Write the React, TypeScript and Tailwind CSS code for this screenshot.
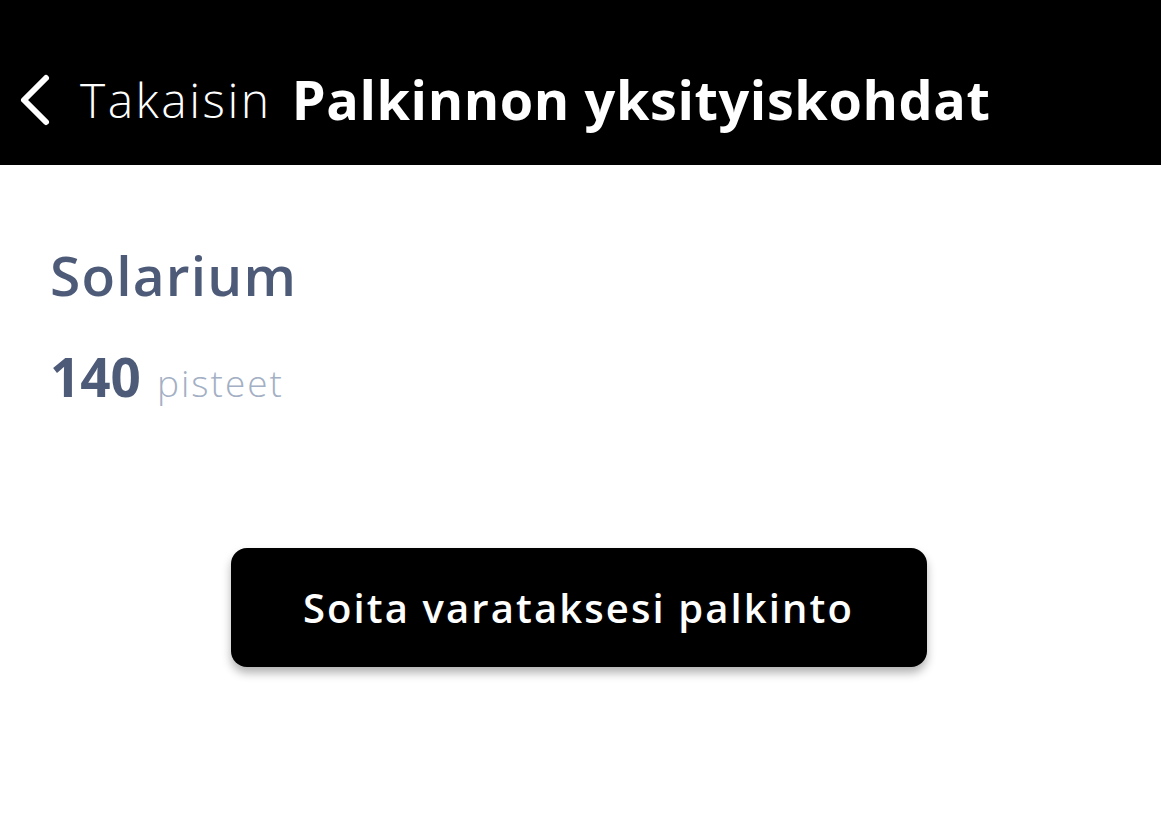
export default function App() {
  return (
    <div className="min-h-screen w-[1161px] bg-white font-['Open_Sans',sans-serif]">
      <header className="flex h-[165px] items-center bg-black pt-[34px] pl-[14px]">
        <svg width="40" height="56" viewBox="0 0 40 56" className="mr-[26px]" fill="none">
          <path d="M32 6 L10 28 L32 50" stroke="white" strokeWidth="6" strokeLinecap="round" strokeLinejoin="round" />
        </svg>
        <span className="mr-[20px] text-[48px] font-light tracking-[2.5px] text-white">Takaisin</span>
        <span className="text-[54px] font-bold tracking-[0.6px] text-white">Palkinnon yksityiskohdat</span>
      </header>
      <main className="px-[50px] pt-[82px]">
        <h1 className="text-[55px] leading-none font-semibold tracking-[1.2px] text-[#4d5b78]">Solarium</h1>
        <div className="mt-[48px] flex items-baseline gap-[16px]">
          <span className="text-[53px] leading-none font-bold text-[#4d5b78]">140</span>
          <span className="text-[37px] leading-none font-light tracking-[2px] text-[#a3afc4]">pisteet</span>
        </div>
      </main>
      <div className="mt-[145px] flex justify-center pr-[4px]">
        <button className="flex h-[119px] w-[696px] items-center justify-center rounded-[16px] bg-black text-[40px] font-semibold tracking-[2.1px] text-white shadow-[0_6px_10px_rgba(0,0,0,0.3)]">
          Soita varataksesi palkinto
        </button>
      </div>
    </div>
  );
}
